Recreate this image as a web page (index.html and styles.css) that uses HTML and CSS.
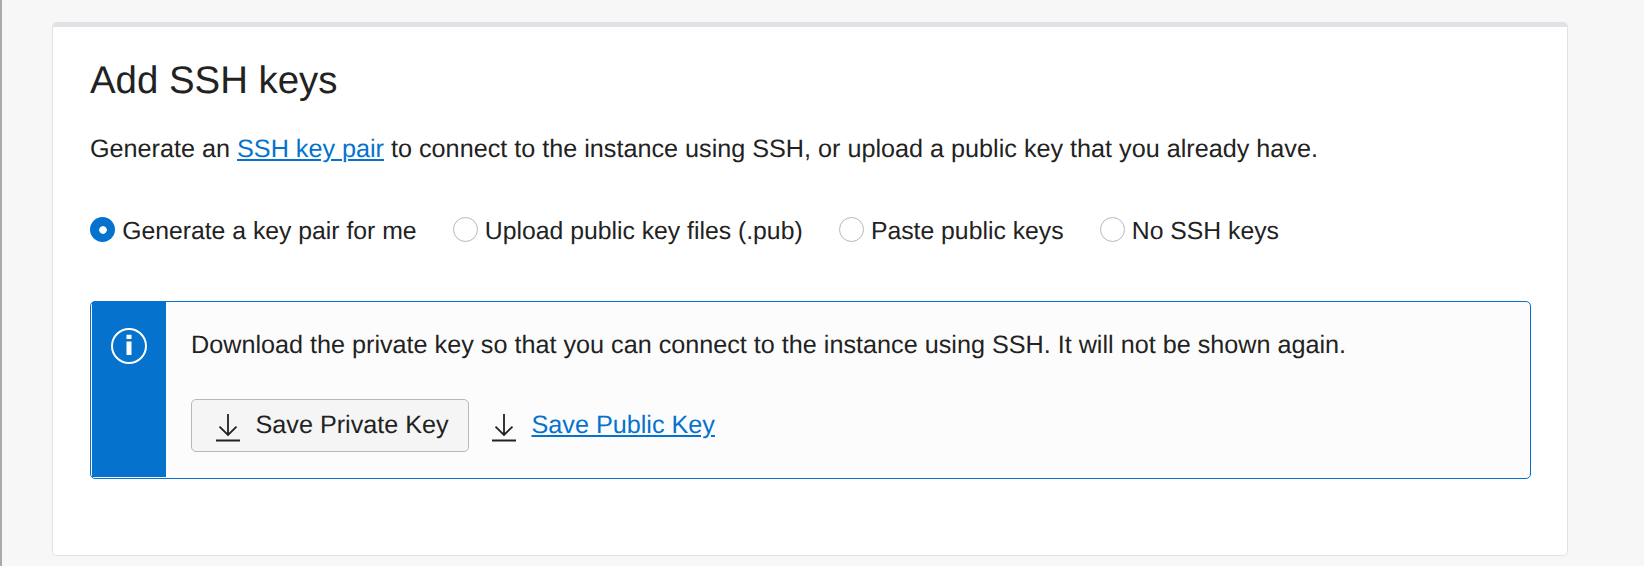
FILE: index.html
```html
<!DOCTYPE html>
<html lang="en">
<head>
<meta charset="utf-8">
<title>Add SSH keys</title>
<link rel="stylesheet" href="styles.css">
</head>
<body>
<main class="page">
  <section class="card">
    <h1 class="title">Add SSH keys</h1>
    <p class="intro">Generate an <a class="link" href="#">SSH key pair</a> to connect to the instance using SSH, or upload a public key that you already have.</p>
    <div class="options">
      <label class="option"><input class="radio" type="radio" name="key" checked><span>Generate a key pair for me</span></label>
      <label class="option"><input class="radio" type="radio" name="key"><span>Upload public key files (.pub)</span></label>
      <label class="option"><input class="radio" type="radio" name="key"><span>Paste public keys</span></label>
      <label class="option"><input class="radio" type="radio" name="key"><span>No SSH keys</span></label>
    </div>
    <div class="notice">
      <div class="notice-side">
        <svg class="info" width="36" height="36" viewBox="0 0 36 36"><circle cx="18" cy="18" r="17" fill="none" stroke="#fff" stroke-width="2"/><path d="M15.5 6.7h5v4.3h-5zM15.5 13.5h5V27h-5z" fill="#fff"/></svg>
      </div>
      <div class="notice-body">
        <p class="notice-text">Download the private key so that you can connect to the instance using SSH. It will not be shown again.</p>
        <div class="actions">
          <button class="button"><svg class="download" width="24" height="28" viewBox="0 0 24 28"><path d="M12 0v21M3.5 12.7l8.5 8.2 8.5-8.2M0 26.5h24" fill="none" stroke="#222" stroke-width="1.8"/></svg><span>Save Private Key</span></button>
          <a class="save-link" href="#"><svg class="download" width="24" height="28" viewBox="0 0 24 28"><path d="M12 0v21M3.5 12.7l8.5 8.2 8.5-8.2M0 26.5h24" fill="none" stroke="#222" stroke-width="1.8"/></svg><span class="link">Save Public Key</span></a>
        </div>
      </div>
    </div>
  </section>
</main>
</body>
</html>
```
FILE: styles.css
```css
* { box-sizing: border-box; }
body {
  margin: 0;
  background: #f7f7f7;
  color: #222;
  font: 25.2px/36px "Liberation Sans", Arial, sans-serif;
  text-rendering: geometricPrecision;
}
.page {
  height: 566px;
  padding: 22px 76px 0 50px;
  border-left: 2px solid #aaa;
}
.card {
  height: 534px;
  padding: 30px 36px 0 37px;
  background: #fff;
  border: 1px solid #e1e2e6;
  border-top-width: 5px;
  border-radius: 5px;
}
.title {
  margin: 0 0 26px;
  font-size: 38.4px;
  font-weight: 400;
  line-height: 48px;
}
.intro { margin: 0; }
.link {
  color: #0572ce;
  text-decoration: underline;
  text-decoration-thickness: 2px;
  text-underline-offset: 2px;
}
.save-link { text-decoration: none; }
.options {
  display: flex;
  gap: 36.1px;
  margin-top: 47px;
  font-size: 24.75px;
}
.option {
  display: flex;
  gap: 7.2px;
  white-space: nowrap;
}
.radio {
  appearance: none;
  flex: none;
  width: 25px;
  height: 25px;
  margin: 3px 0 0;
  border: 1px solid #b5b8c1;
  border-radius: 50%;
  background: #fff;
}
.radio:checked {
  border: 0;
  background: radial-gradient(circle at 13px 13px, #fff 3.4px, #0572ce 4.2px);
}
.notice {
  display: flex;
  height: 178px;
  margin-top: 51px;
  padding: 0 0 1px 1px;
  border: 1px solid #0572ce;
  border-radius: 5px;
  background: #fcfcfc;
}
.notice-side {
  flex: none;
  width: 74px;
  padding: 26px 0 0 19px;
  background: #0572ce;
}
.info, .download { display: block; flex: none; }
.notice-body { padding: 25px 0 0 25px; }
.notice-text { margin: 0; white-space: nowrap; }
.actions {
  display: flex;
  gap: 23px;
  margin-top: 36px;
}
.button, .save-link {
  display: flex;
  align-items: center;
  gap: 15.5px;
  height: 53px;
  padding: 0 0 1px;
  font: inherit;
  color: #222;
  white-space: nowrap;
  text-rendering: inherit;
}
.button {
  width: 278px;
  padding-left: 24px;
  background: #f5f5f5;
  border: 1px solid #b5b8c1;
  border-radius: 5px;
}
.download { margin-top: 5px; }
```
